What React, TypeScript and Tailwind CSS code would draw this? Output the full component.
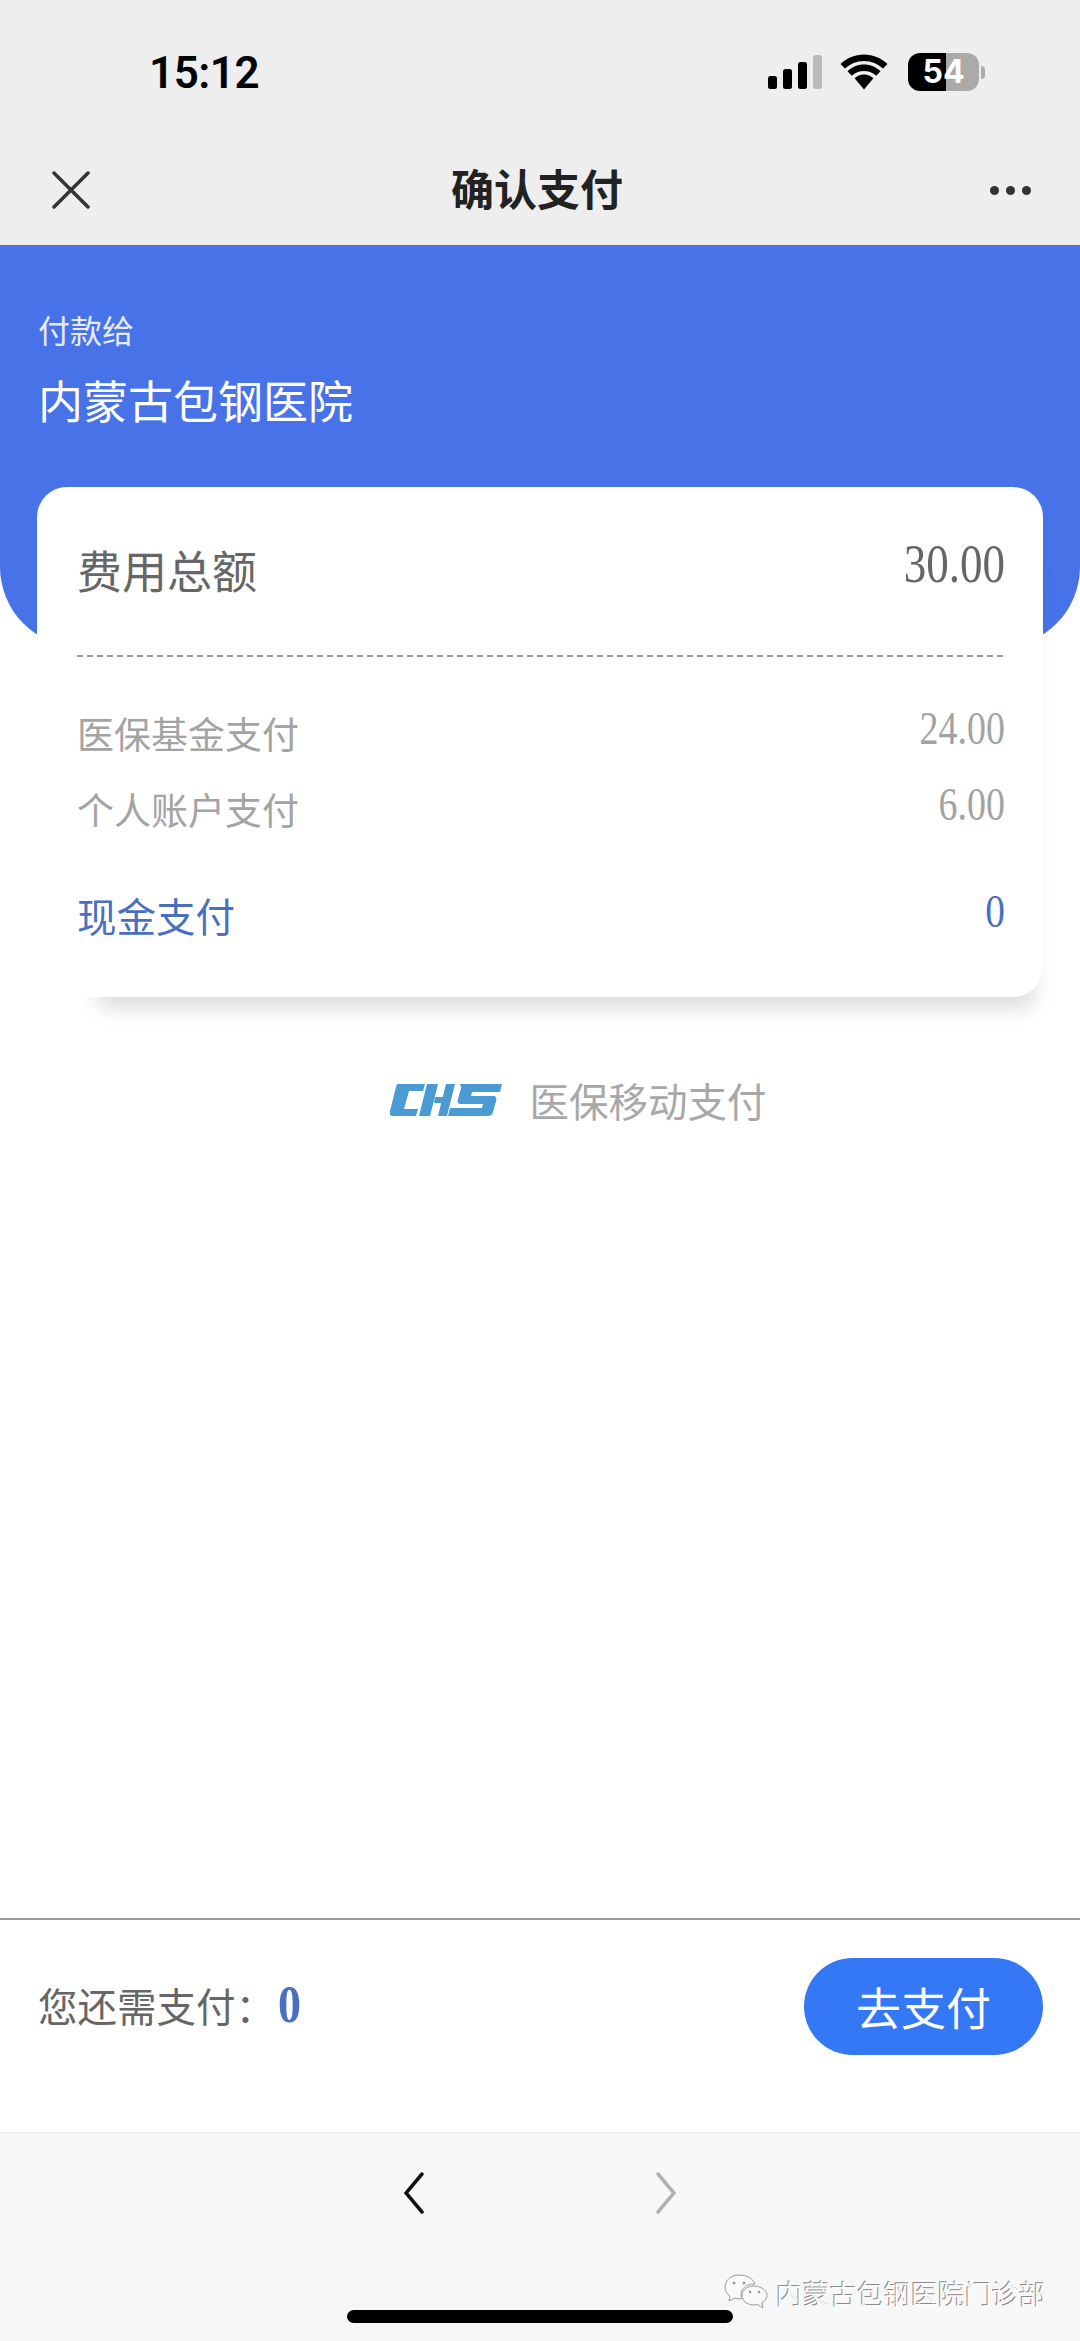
import React from "react";

const cjk = "font-['Noto_Sans_CJK_SC','Noto_Sans',sans-serif]";
const serif = "font-['Liberation_Serif','Noto_Serif',serif]";

interface FeeRowProps {
    label: string;
    amount: string;
    className: string;
    amountClassName: string;
}

const FeeRow = ({label, amount, className, amountClassName}: FeeRowProps) => (
    <div className={`flex items-baseline justify-between ${className}`}>
        <span>{label}</span>
        <span className={`origin-bottom scale-y-[1.2] ${serif} ${amountClassName}`}>{amount}</span>
    </div>
);

const StatusIcons = () => (
    <div className="flex h-[44px] items-center">
        <svg width="56" height="36" viewBox="0 0 56 36">
            <rect x="1" y="22" width="9" height="13" rx="2.5" fill="#000"/>
            <rect x="16" y="15" width="9" height="20" rx="2.5" fill="#000"/>
            <rect x="31" y="8" width="9" height="27" rx="2.5" fill="#000"/>
            <rect x="46" y="1" width="9" height="34" rx="2.5" fill="#bbb"/>
        </svg>
        <svg className="ml-[17px]" width="48" height="36" viewBox="0 0 48 36">
            <path d="M24 7c7.500 0 14 3 19 7.500L47.500 10C41 4 33 .500 24 .500S7 4 .500 10L5 14.500C10 10 16.500 7 24 7z" fill="#000"/>
            <path d="M24 17c4.800 0 9 1.800 12.200 4.800l4.300-4.500C36 13 30.500 10.500 24 10.500S12 13 7.500 17.300l4.300 4.500C15 18.800 19.200 17 24 17z" fill="#000"/>
            <path d="M24 20.500c-3.700 0-6.900 1.400-9.400 3.700L24 35.500l9.400-11.300c-2.500-2.300-5.700-3.700-9.400-3.700z" fill="#000"/>
        </svg>
        <div className="ml-[20px] flex items-center">
            <div className="flex h-[38px] w-[71px] items-center justify-center rounded-[12px] bg-[linear-gradient(90deg,#000_0,#000_53%,#aaa_53%,#aaa_100%)] font-['Inter',sans-serif] text-[32px] font-bold leading-none text-white">
                54
            </div>
            <div className="ml-[2px] h-[13px] w-[4px] rounded-r-full bg-[#aaa]"/>
        </div>
    </div>
);

const ChsLogo = () => (
    <svg width="112" height="34" viewBox="0 0 112 34" fill="#4a9ad4">
        <path d="M8 1H35L33 8H19L14 26H28L26 33H3C0 33-1 31 0 28L6 4C6.500 2 7 1 8 1Z"/>
        <path d="M37 1H48L40 33H29Z"/>
        <path d="M45 14H55L54 20H44Z"/>
        <path d="M56 1H65L57 33H48Z"/>
        <path d="M70 1H112L110 9H82L81 13H103C106 13 107 15 106 18L103 29C102 32 100 33 98 33H58L60 25H92L93 21H71C68 21 67 19 68 16L71 5C71.500 2 69 1 70 1Z"/>
    </svg>
);

const WeChatMark = () => (
    <svg width="44" height="38" viewBox="0 0 44 38" fill="#fafafa" stroke="#9a9a9a" strokeWidth="1">
        <path d="M15 1C7 1 1 6.500 1 13c0 3.800 2 7 5 9.200L5 27l5.500-2.800c1.500.400 3 .600 4.500.600 1 0 2-.100 3-.300C17 23 17 22 17 21c0-6.500 5.500-11 13-11 .300 0 .500 0 .800 0C29.500 5 23 1 15 1z"/>
        <path d="M30 12c-6.500 0-12 4-12 9.500S23.500 31 30 31c1.300 0 2.500-.200 3.700-.500L39 34l-1.200-5.200C41 27 43 24.500 43 21.500 43 16 36.500 12 30 12z"/>
        <circle cx="10" cy="9" r="1.500" fill="#9a9a9a" stroke="none"/>
        <circle cx="20" cy="9" r="1.500" fill="#9a9a9a" stroke="none"/>
        <circle cx="26" cy="18" r="1.300" fill="#9a9a9a" stroke="none"/>
        <circle cx="35" cy="18" r="1.300" fill="#9a9a9a" stroke="none"/>
    </svg>
);

const App = () => {
    return (
        <div className={`relative flex h-[2341px] w-[1080px] flex-col overflow-hidden bg-white ${cjk}`}>
            <header className="h-[245px] shrink-0 bg-[#eeeeee]">
                <div className="flex h-[135px] justify-between pl-[149px] pr-[95px] pt-[51px]">
                    <span className="font-['Roboto',sans-serif] text-[44px] font-semibold leading-[44px] tracking-[-0.5px] text-black">
                        15:12
                    </span>
                    <div className="-mt-[1px]"><StatusIcons/></div>
                </div>
                <div className="flex h-[110px] items-center justify-between pl-[52px] pr-[49px]">
                    <svg width="38" height="38" viewBox="0 0 38 38" stroke="#333" strokeWidth="3.500" strokeLinecap="round">
                        <path d="M2 2L36 36M36 2L2 36"/>
                    </svg>
                    <h1 className="-mt-[5px] -translate-x-[3px] text-[43px] font-semibold leading-none text-[#222]">确认支付</h1>
                    <div className="flex gap-[7px]">
                        <span className="h-[9px] w-[9px] rounded-full bg-[#333]"/>
                        <span className="h-[9px] w-[9px] rounded-full bg-[#333]"/>
                        <span className="h-[9px] w-[9px] rounded-full bg-[#333]"/>
                    </div>
                </div>
            </header>

            <section className="h-[402px] shrink-0 rounded-b-[80px] bg-[#4772e8] pl-[38px] pt-[60px] text-white">
                <p className="text-[32px] leading-[48px] text-[#e6ecfb]">付款给</p>
                <p className="mt-[19px] text-[45px] leading-[56px]">内蒙古包钢医院</p>
            </section>

            <main className="flex-1">
                <div className="relative -mt-[160px] ml-[37px] h-[510px] w-[1006px] rounded-[30px] bg-white pl-[40px] pr-[38px] shadow-[26px_46px_20px_-36px_rgba(0,0,0,0.15)]">
                    <FeeRow
                        label="费用总额"
                        amount="30.00"
                        className="h-[168px] pt-[50px] text-[45px] leading-[66px] text-[#666666]"
                        amountClassName="-translate-y-[3px]"
                    />
                    <div className="h-[2px] bg-[repeating-linear-gradient(90deg,#999999_0,#999999_6px,transparent_6px,transparent_10px)]"/>
                    <div className="pt-[38px]">
                        <FeeRow
                            label="医保基金支付"
                            amount="24.00"
                            className="h-[76px] text-[37px] leading-[76px] text-[#a3a3a3]"
                            amountClassName="text-[38px]"
                        />
                        <FeeRow
                            label="个人账户支付"
                            amount="6.00"
                            className="h-[76px] text-[37px] leading-[76px] text-[#a3a3a3]"
                            amountClassName="text-[38px]"
                        />
                        <FeeRow
                            label="现金支付"
                            amount="0"
                            className="mt-[38px] h-[60px] text-[39.500px] leading-[60px] text-[#4a6fc0]"
                            amountClassName="-translate-y-[2px]"
                        />
                    </div>
                </div>
                <div className="mt-[73px] flex h-[60px] items-center justify-center gap-[28px] pl-[76px]">
                    <ChsLogo/>
                    <span className="text-[39.500px] text-[#a8a8a8]">医保移动支付</span>
                </div>
            </main>

            <footer className="flex h-[216px] shrink-0 items-center justify-between border-y-2 border-t-[#999999] border-b-[#eeeeee] pb-[40px] pl-[38px] pr-[37px]">
                <div className="flex items-baseline text-[39.500px] text-[#666666]">
                    <span>您还需支付：</span>
                    <span className={`origin-bottom translate-x-[3px] translate-y-[3px] scale-y-[1.15] text-[46px] font-bold text-[#4a6fc0] ${serif}`}>0</span>
                </div>
                <button className="h-[97px] w-[239px] rounded-full bg-[#3478f6] text-[45px] leading-none text-white">
                    去支付
                </button>
            </footer>

            <nav className="flex h-[207px] shrink-0 flex-col items-center bg-[#f7f7f7] pt-[38px]">
                <div className="flex gap-[232px]">
                    <svg width="20" height="42" viewBox="0 0 20 42" fill="none" stroke="#111" strokeWidth="3.500" strokeLinecap="round">
                        <path d="M18 2L2 21L18 40"/>
                    </svg>
                    <svg width="20" height="42" viewBox="0 0 20 42" fill="none" stroke="#b0b0b0" strokeWidth="3.500" strokeLinecap="round">
                        <path d="M2 2L18 21L2 40"/>
                    </svg>
                </div>
                <div className="mt-[96px] h-[13px] w-[386px] rounded-full bg-black"/>
            </nav>

            <div className="absolute left-[724px] top-[2274px] flex items-center gap-[8px]">
                <WeChatMark/>
                <span className="text-[27px] leading-none text-[#fafafa] [text-shadow:-1px_-1px_0_#8a8a8a]">
                    内蒙古包钢医院门诊部
                </span>
            </div>
        </div>
    );
};

export default App;
